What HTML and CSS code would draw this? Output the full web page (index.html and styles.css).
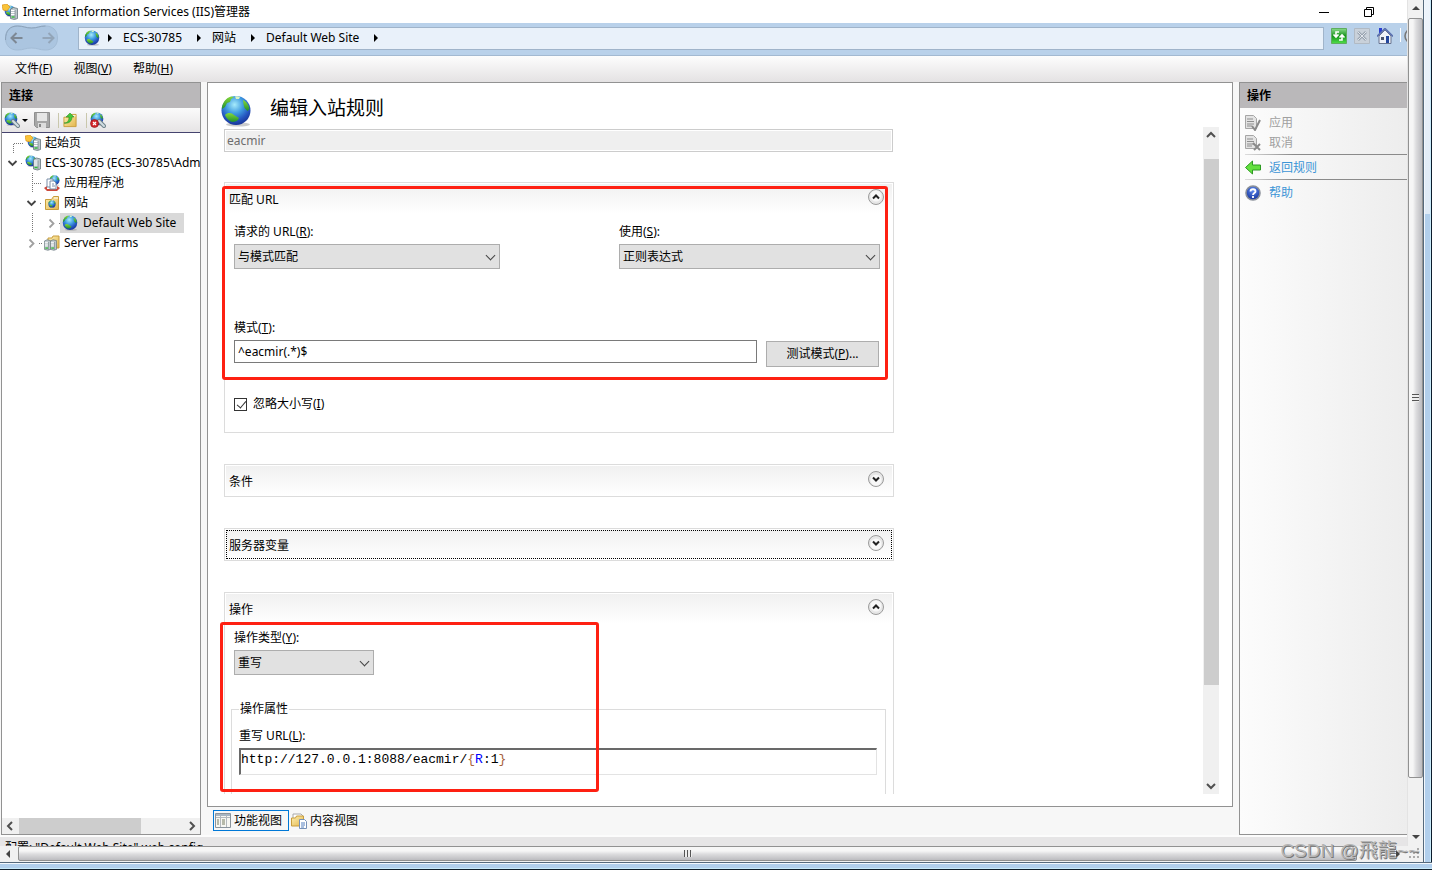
FILE: index.html
```html
<!DOCTYPE html>
<html lang="zh-CN">

<head>
    <meta charset="UTF-8">
    <meta name="viewport" content="width=device-width, initial-scale=1.0">
    <title>Internet Information Services (IIS)管理器</title>
    <link rel="stylesheet" href="styles.css">
</head>

<body>
    <!-- shared icons -->
    <svg class="sprite" aria-hidden="true">
        <defs>
            <radialGradient id="sea" cx="0.45" cy="0.3" r="0.75">
                <stop offset="0" stop-color="#a6ebfb" />
                <stop offset="0.4" stop-color="#3f9be0" />
                <stop offset="0.7" stop-color="#2556c0" />
                <stop offset="1" stop-color="#152c8c" />
            </radialGradient>
            <linearGradient id="land" x1="0" y1="0" x2="0" y2="1">
                <stop offset="0" stop-color="#86d83a" />
                <stop offset="1" stop-color="#1f8f2c" />
            </linearGradient>
            <linearGradient id="paper" x1="0" y1="0" x2="1" y2="1">
                <stop offset="0" stop-color="#fdf0b4" />
                <stop offset="1" stop-color="#e3b64c" />
            </linearGradient>
            <linearGradient id="green" x1="0" y1="0" x2="0" y2="1">
                <stop offset="0" stop-color="#8bdc8b" />
                <stop offset="0.5" stop-color="#16921c" />
                <stop offset="1" stop-color="#4fe04a" />
            </linearGradient>
            <radialGradient id="helpblue" cx="0.5" cy="0.3" r="0.7">
                <stop offset="0" stop-color="#5f8cf0" />
                <stop offset="1" stop-color="#14339c" />
            </radialGradient>
        </defs>
        <symbol id="globe" viewBox="0 0 32 32">
            <ellipse cx="18" cy="29.500" rx="12" ry="2" fill="#999" opacity="0.5" />
            <circle cx="16" cy="15.500" r="14.500" fill="url(#sea)" />
            <path d="M2 12c1-5 4-9 9-10.500l3 0.500-3 2-1 3-3 1-2 4-3 2z" fill="url(#land)" />
            <path d="M15 1.500c1-0.600 4 0 5 0.500l-1 2-3 0z" fill="#d9f3c4" />
            <path d="M23 5c3 1 6 5 6.500 9l-2 2-3-3-1-4z" fill="url(#land)" />
            <path d="M5 20c3-3 7-2 9 0l5 3c-1 3-4 4-7 4-3-1-6-4-7-7z" fill="url(#land)" />
        </symbol>
        <symbol id="tower" viewBox="0 0 8 13">
            <path d="M0.500 2l3-1.500 4 1v10l-3 1-4-1z" fill="#bcc6ca" stroke="#66767c" stroke-width="0.8" />
            <path d="M5 3v9" stroke="#7d8a8f" stroke-width="0.8" />
            <path d="M1 3.500h3.500M1 5.500h3.500M1 7.500h3.500" stroke="#fff" />
            <path d="M1.500 10h3" stroke="#2fbf34" stroke-width="1.4" />
        </symbol>
        <symbol id="server" viewBox="0 0 16 16">
            <use href="#globe" x="0" y="0" width="12" height="12" />
            <use href="#tower" x="8" y="2" width="8" height="14" />
        </symbol>
        <symbol id="start" viewBox="0 0 16 16">
            <use href="#globe" x="2" y="1" width="12" height="12" />
            <path d="M0 1l5-1 3 3-3 4-4-1z" fill="#f9c338" stroke="#d98b10" stroke-width="0.6" />
            <use href="#tower" x="8" y="3" width="8" height="13" />
        </symbol>
        <symbol id="pool" viewBox="0 0 16 16">
            <use href="#globe" x="5" y="0" width="11" height="11" />
            <path d="M0 13l3-2v3h10v-3l3 2-3 3H3z" fill="#cc4a3d" />
            <path d="M3 4h6v8H3z" fill="#fff" stroke="#7b8ea8" />
            <path d="M6 6h4l2 2v6H6z" fill="#fff" stroke="#7b8ea8" />
            <path d="M8 9h2M8 11h3" stroke="#7b8ea8" />
        </symbol>
        <symbol id="folder" viewBox="0 0 16 16">
            <path d="M1.500 4.500h6l2-3h5v13h-13z" fill="url(#paper)" stroke="#c99d3c" />
            <path d="M10 3h4" stroke="#fff" />
        </symbol>
        <symbol id="sites" viewBox="0 0 16 16">
            <use href="#folder" width="16" height="16" />
            <use href="#globe" x="4" y="5" width="8" height="8" />
        </symbol>
        <symbol id="farm" viewBox="0 0 16 16">
            <path d="M4 3h4l1-2h6v12H4z" fill="url(#paper)" stroke="#c99d3c" />
            <use href="#tower" x="0" y="4" width="7" height="12" />
            <use href="#tower" x="6" y="4" width="7" height="12" />
        </symbol>
        <symbol id="connect" viewBox="0 0 16 16">
            <use href="#globe" width="14" height="14" />
            <path d="M9 9l5 5" stroke="#71848c" stroke-width="4" stroke-linecap="round" />
            <path d="M9 9l5 5" stroke="#d3dee3" stroke-width="2" stroke-linecap="round" />
        </symbol>
        <symbol id="disconnect" viewBox="0 0 16 16">
            <use href="#connect" width="16" height="16" />
            <circle cx="4.500" cy="11.500" r="4" fill="#d3262b" stroke="#8f1216" stroke-width="0.6" />
            <path d="M3 10l3 3M6 10l-3 3" stroke="#fff" stroke-width="1.2" />
        </symbol>
        <symbol id="save" viewBox="0 0 16 16">
            <path d="M0.500 0.500h15v15h-13l-2-2z" fill="#a6a6a6" stroke="#8f8f8f" />
            <path d="M3 1h10v8H3z" fill="#e6e6e6" />
            <path d="M4 11h8v5H4z" fill="#ddd" />
            <path d="M5 12h2v3H5z" fill="#888" />
        </symbol>
        <symbol id="up" viewBox="0 0 16 16">
            <use href="#folder" y="1" width="16" height="15" />
            <path d="M2 11c4 0 5-3 5-6H4l4-4 4 4h-2c0 4-3 7-8 6z" fill="#47c738" stroke="#22831c" stroke-width="0.5" />
        </symbol>
        <symbol id="doc" viewBox="0 0 16 16">
            <path d="M0.500 0.500h8l3 3v10h-11z" fill="#e3e3e3" stroke="#a6a6a6" />
            <path d="M2 4h6M2 6.500h7M2 9h7M2 11h5" stroke="#8f8f8f" />
        </symbol>
        <symbol id="chevron-up" viewBox="0 0 16 16">
            <path d="M4 10l4-4 4 4" fill="none" stroke="#505050" stroke-width="2" />
        </symbol>
        <symbol id="chevron-down" viewBox="0 0 16 16">
            <path d="M4 6l4 4 4-4" fill="none" stroke="#505050" stroke-width="2" />
        </symbol>
        <symbol id="chevron-left" viewBox="0 0 16 16">
            <path d="M10 4L6 8l4 4" fill="none" stroke="#505050" stroke-width="2" />
        </symbol>
        <symbol id="chevron-right" viewBox="0 0 16 16">
            <path d="M6 4l4 4-4 4" fill="none" stroke="#505050" stroke-width="2" />
        </symbol>
        <symbol id="expander" viewBox="0 0 16 16">
            <circle cx="8" cy="8" r="7.500" fill="#e6e6e6" stroke="#9b9b9b" />
            <circle cx="8" cy="7" r="5.500" fill="#f8f8f8" />
            <path d="M5 9.500l3-3 3 3" fill="none" stroke="#222" stroke-width="2" />
        </symbol>
        <!-- tree lines -->
        <symbol id="line-first" viewBox="0 0 20 20">
            <path d="M10.500 20V10.500H20" fill="none" stroke="#777" stroke-dasharray="1 1" />
        </symbol>
        <symbol id="line-leaf" viewBox="0 0 20 20">
            <path d="M10.500 0V20M10 10.500H20" fill="none" stroke="#777" stroke-dasharray="1 1" />
        </symbol>
        <symbol id="line-open" viewBox="0 0 20 20">
            <path d="M18 10.500h2" stroke="#777" stroke-dasharray="1 1" />
            <path d="M5.500 8l4 4 4-4" fill="none" stroke="#444" stroke-width="1.8" />
        </symbol>
        <symbol id="line-closed" viewBox="0 0 20 20">
            <path d="M17 10.500h3" stroke="#777" stroke-dasharray="1 1" />
            <path d="M7.500 6.500l4 4-4 4" fill="none" stroke="#a0a0a0" stroke-width="1.8" />
        </symbol>
        <symbol id="line-guide" viewBox="0 0 20 20">
            <path d="M10.500 0V20" stroke="#777" stroke-dasharray="1 1" />
        </symbol>
    </svg>

    <div class="session">
        <div class="app">
            <header class="titlebar">
                <svg class="icon"><use href="#start" /></svg>
                <span class="titlebar-text">Internet Information Services (IIS)管理器</span>
                <button class="win-btn" aria-label="最小化">
                    <svg width="10" height="10"><path d="M0 5.500h10" stroke="#000" /></svg>
                </button>
                <button class="win-btn" aria-label="还原">
                    <svg width="10" height="10"><path d="M0.500 2.500h7v7h-7zM2.500 2V0.500h7v7H8" fill="none" stroke="#000" /></svg>
                </button>
            </header>

            <div class="address">
                <svg class="nav-arrows" viewBox="0 0 54 26">
                    <path d="M1 13C1 5 6 1 13 1c6 0 8 2 14 2s8-2 14-2c7 0 12 4 12 12s-5 12-12 12c-6 0-8-2-14-2s-8 2-14 2C6 25 1 21 1 13z" fill="#abc5e0" stroke="#a3bcd6" />
                    <path d="M1 15C1 5 6 1 13 1c6 0 8 2 14 2s8-2 14-2" fill="none" stroke="#8ba2ba" />
                    <path d="M18 13H7M12 8l-5 5 5 5" fill="none" stroke="#7d8894" stroke-width="2" />
                    <path d="M38 13h11M44 8l5 5-5 5" fill="none" stroke="#93a5b8" stroke-width="2" />
                </svg>
                <nav class="crumbs">
                    <svg class="icon"><use href="#globe" /></svg>
                    <span class="crumb-arrow"></span>
                    <a href="#">ECS-30785</a>
                    <span class="crumb-arrow"></span>
                    <a href="#">网站</a>
                    <span class="crumb-arrow"></span>
                    <a href="#">Default Web Site</a>
                    <span class="crumb-arrow"></span>
                </nav>
                <div class="address-tools">
                    <button aria-label="刷新">
                        <svg class="icon" viewBox="0 0 16 16">
                            <path d="M0.500 0.500h15v15h-15z" fill="url(#green)" stroke="#5fae5f" />
                            <path d="M8 4H5v4M2.500 6.500L5 9l2.500-2.500M8 12h3V8M8.500 9.500L11 7l2.500 2.500" fill="none" stroke="#fff" stroke-width="1.6" />
                        </svg>
                    </button>
                    <button aria-label="停止" disabled>
                        <svg class="icon" viewBox="0 0 16 16">
                            <path d="M0.500 0.500h15v15h-15z" fill="#c9d1da" stroke="#b1bac4" />
                            <path d="M4 4l8 8M12 4l-8 8" stroke="#98a3b0" stroke-width="2.6" />
                            <path d="M4 4l8 8M12 4l-8 8" stroke="#dfe4ea" />
                        </svg>
                    </button>
                    <button aria-label="主页">
                        <svg class="icon" viewBox="0 0 16 16">
                            <path d="M2 0h3v5H2z" fill="#2a3ed0" />
                            <path d="M2 8l6-6 6 6v7.500H2z" fill="#eef1f8" stroke="#6a7590" />
                            <path d="M0 8.500l8-8 8 8" fill="none" stroke="#5a6fae" stroke-width="1.6" />
                            <path d="M4 9h3v3H4z" fill="#48536c" />
                            <path d="M9 8h3v7H9z" fill="#23469c" />
                        </svg>
                    </button>
                    <span class="address-sep"></span>
                    <button aria-label="帮助">
                        <svg class="icon" viewBox="0 0 16 16"><circle cx="8" cy="8" r="7" fill="#c6d6e8" stroke="#777" stroke-width="1.6" /></svg>
                    </button>
                </div>
            </div>

            <nav class="menu">
                <button>文件(<u>F</u>)</button>
                <button>视图(<u>V</u>)</button>
                <button>帮助(<u>H</u>)</button>
            </nav>

            <main class="panes">
                <aside class="pane connections">
                    <h2 class="pane-title">连接</h2>
                    <div class="toolbar">
                        <button aria-label="连接"><svg class="icon"><use href="#connect" /></svg></button>
                        <span class="toolbar-caret"></span>
                        <button aria-label="保存" disabled><svg class="icon"><use href="#save" /></svg></button>
                        <span class="toolbar-sep"></span>
                        <button aria-label="向上"><svg class="icon"><use href="#up" /></svg></button>
                        <span class="toolbar-sep"></span>
                        <button aria-label="断开"><svg class="icon"><use href="#disconnect" /></svg></button>
                    </div>
                    <ul class="tree">
                        <li class="node">
                            <svg class="line"><use href="#line-first" /></svg>
                            <span class="node-label"><svg class="icon"><use href="#start" /></svg>起始页</span>
                        </li>
                        <li class="node">
                            <svg class="line"><use href="#line-open" /></svg>
                            <span class="node-label"><svg class="icon"><use href="#server" /></svg>ECS-30785 (ECS-30785\Administrator)</span>
                        </li>
                        <li class="node node-child">
                            <svg class="line"><use href="#line-leaf" /></svg>
                            <span class="node-label"><svg class="icon"><use href="#pool" /></svg>应用程序池</span>
                        </li>
                        <li class="node node-child">
                            <svg class="line"><use href="#line-open" /></svg>
                            <span class="node-label"><svg class="icon"><use href="#sites" /></svg>网站</span>
                        </li>
                        <li class="node node-child">
                            <svg class="line"><use href="#line-guide" /></svg>
                            <svg class="line"><use href="#line-closed" /></svg>
                            <span class="node-label node-selected"><svg class="icon"><use href="#globe" /></svg>Default Web Site</span>
                        </li>
                        <li class="node node-child">
                            <svg class="line"><use href="#line-closed" /></svg>
                            <span class="node-label"><svg class="icon"><use href="#farm" /></svg>Server Farms</span>
                        </li>
                    </ul>
                    <div class="tree-scroll">
                        <svg class="icon"><use href="#chevron-left" /></svg>
                        <div class="tree-track"><div class="tree-thumb"></div></div>
                        <svg class="icon"><use href="#chevron-right" /></svg>
                    </div>
                </aside>

                <section class="workspace">
                    <div class="pane editor">
                        <div class="editor-head">
                            <svg class="editor-icon"><use href="#globe" /></svg>
                            <h1>编辑入站规则</h1>
                        </div>
                        <div class="editor-body">
                            <form class="rule">
                                <input class="rule-name" type="text" value="eacmir" aria-label="名称" disabled>

                                <div class="card">
                                    <div class="card-head">
                                        <h3>匹配 URL</h3>
                                        <button type="button" class="expander" aria-label="折叠"><svg class="icon"><use href="#expander" /></svg></button>
                                    </div>
                                    <div class="card-body match-body">
                                        <div class="match-row">
                                            <div class="field field-requested">
                                                <label for="requested">请求的 URL(<u>R</u>):</label>
                                                <span class="select"><select id="requested"><option>与模式匹配</option></select></span>
                                            </div>
                                            <div class="field field-using">
                                                <label for="using">使用(<u>S</u>):</label>
                                                <span class="select"><select id="using"><option>正则表达式</option></select></span>
                                            </div>
                                        </div>
                                        <div class="field">
                                            <label for="pattern">模式(<u>T</u>):</label>
                                            <div class="pattern-row">
                                                <input id="pattern" type="text" value="^eacmir(.*)$">
                                                <button type="button" class="test-btn">测试模式(<u>P</u>)...</button>
                                            </div>
                                        </div>
                                        <label class="check"><input type="checkbox" checked><span>忽略大小写(<u>I</u>)</span></label>
                                    </div>
                                    <div class="mark mark-match"></div>
                                </div>

                                <div class="card">
                                    <div class="card-head">
                                        <h3>条件</h3>
                                        <button type="button" class="expander expander-down" aria-label="展开"><svg class="icon"><use href="#expander" /></svg></button>
                                    </div>
                                </div>

                                <div class="card">
                                    <div class="card-head card-focus">
                                        <h3>服务器变量</h3>
                                        <button type="button" class="expander expander-down" aria-label="展开"><svg class="icon"><use href="#expander" /></svg></button>
                                    </div>
                                </div>

                                <div class="card">
                                    <div class="card-head">
                                        <h3>操作</h3>
                                        <button type="button" class="expander" aria-label="折叠"><svg class="icon"><use href="#expander" /></svg></button>
                                    </div>
                                    <div class="card-body">
                                        <div class="field action-type">
                                            <label for="action">操作类型(<u>Y</u>):</label>
                                            <span class="select"><select id="action"><option>重写</option></select></span>
                                        </div>
                                        <fieldset class="action-props">
                                            <legend>操作属性</legend>
                                            <div class="field">
                                                <span id="rewrite-label">重写 URL(<u>L</u>):</span>
                                                <div class="rewrite-url" contenteditable="true" spellcheck="false" role="textbox" aria-labelledby="rewrite-label">http://127.0.0.1:8088/eacmir/<span class="brace">{</span><span class="ref">R</span>:1<span class="brace">}</span></div>
                                            </div>
                                        </fieldset>
                                    </div>
                                    <div class="mark mark-action"></div>
                                </div>
                            </form>
                            <div class="editor-scroll">
                                <svg class="icon"><use href="#chevron-up" /></svg>
                                <div class="editor-track"><div class="editor-thumb"></div></div>
                                <svg class="icon"><use href="#chevron-down" /></svg>
                            </div>
                        </div>
                    </div>
                    <div class="tabs">
                        <button class="tab tab-active">
                            <svg class="icon" viewBox="0 0 16 16">
                                <path d="M0.500 0.500h15v14h-15z" fill="#f7f7f2" stroke="#8a949c" />
                                <path d="M1 1h14v2H1z" fill="#a9b6c2" />
                                <path d="M5.500 3v11M11.500 3v11M1 4.500h14" stroke="#b4b9bd" />
                                <path d="M2 7h2M2 9h2M2 11h2M7 7h3M7 9h3M7 11h3" stroke="#777c60" />
                            </svg>功能视图</button>
                        <button class="tab">
                            <svg class="icon" viewBox="0 0 16 16">
                                <path d="M2 1h8l2 2v9H2z" fill="#fff" stroke="#a8a8a8" />
                                <path d="M0.500 5h4l1-2h7v10h-12z" fill="url(#paper)" stroke="#c99d3c" />
                                <path d="M8.500 6.500h5l2 2v7h-7z" fill="#fff" stroke="#7691b8" />
                                <path d="M10 10h4M10 12h4M10 14h3" stroke="#5480c0" />
                            </svg>内容视图</button>
                    </div>
                </section>

                <aside class="pane actions">
                    <h2 class="pane-title">操作</h2>
                    <div class="action-list">
                        <button class="action" disabled>
                            <svg class="icon" viewBox="0 0 16 16"><use href="#doc" width="16" height="16" /><path d="M7 11l3 4 5-10" fill="none" stroke="#8a8a8a" stroke-width="2" /></svg>应用</button>
                        <button class="action" disabled>
                            <svg class="icon" viewBox="0 0 16 16"><use href="#doc" width="16" height="16" /><path d="M8 8l7 7M15 9l-6 6" stroke="#8a8a8a" stroke-width="2" /></svg>取消</button>
                        <hr>
                        <a class="action" href="#">
                            <svg class="icon" viewBox="0 0 16 16"><path d="M0.500 7.500l7-6.500v4h8v5h-8v4z" fill="#63e03f" stroke="#2d9a22" /></svg>返回规则</a>
                        <hr>
                        <a class="action" href="#">
                            <svg class="icon" viewBox="0 0 16 16">
                                <circle cx="8" cy="8" r="7" fill="url(#helpblue)" stroke="#8a8f99" stroke-width="1.6" />
                                <path d="M5.500 6.500c0-3 5-3 5 0 0 1.600-2.500 1.600-2.500 3.500M8 11v2" fill="none" stroke="#fff" stroke-width="1.8" />
                            </svg>帮助</a>
                    </div>
                </aside>
            </main>

            <footer class="status">配置: "Default Web Site" web.config</footer>
        </div>

        <!-- outer session window -->
        <div class="vscroll">
            <span class="arrow arrow-up"></span>
            <div class="vthumb"><span class="grip"></span></div>
            <span class="arrow arrow-down"></span>
        </div>
        <div class="hscroll">
            <span class="arrow arrow-left"></span>
            <div class="hthumb"><span class="grip grip-h"></span></div>
            <span class="arrow arrow-right"></span>
        </div>
        <svg class="corner" viewBox="0 0 16 16">
            <path d="M10 3h2M6 7h2M10 7h2M2 11h2M6 11h2M10 11h2" stroke="#aaa" stroke-width="2" />
        </svg>
        <div class="edge-right"></div>
        <div class="edge-bottom"></div>
    </div>
    <div class="watermark">CSDN @飛龍~~</div>
</body>

</html>
```
FILE: styles.css
```css
* {
    box-sizing: border-box;
}

body {
    margin: 0;
    font-family: "Noto Sans", "Noto Sans CJK SC", sans-serif;
    font-size: 12px;
    line-height: 16px;
    color: #000;
    background: #fff;
}

button,
input,
select {
    font: inherit;
    color: inherit;
    border-radius: 0;
}

button {
    padding: 0;
    border: 0;
    background: none;
}

a {
    color: inherit;
    text-decoration: none;
}

h1,
h2,
h3 {
    margin: 0;
    font-size: 12px;
    font-weight: normal;
}

u {
    text-underline-offset: 1px;
}

.sprite {
    position: absolute;
    width: 0;
    height: 0;
}

.icon {
    display: block;
    flex: none;
    width: 16px;
    height: 16px;
}

/* outer window */
.session {
    display: grid;
    grid-template-columns: minmax(0, 1fr) 16px 9px;
    grid-template-rows: minmax(0, 1fr) 16px 8px;
    height: 100vh;
    overflow: hidden;
}

.app {
    display: flex;
    flex-direction: column;
    overflow: hidden;
    background: #f7f7f7;
}

/* title bar */
.titlebar {
    display: flex;
    flex: none;
    align-items: center;
    height: 23px;
    padding: 0 16px 0 2px;
    background: #fff;
}

.titlebar-text {
    flex: 1;
    margin-left: 5px;
}

.win-btn {
    display: flex;
    align-items: center;
    justify-content: center;
    width: 45px;
    height: 20px;
}

/* address bar */
.address {
    display: flex;
    flex: none;
    align-items: center;
    height: 33px;
    padding: 0 0 2px 4px;
    border-bottom: 1px solid #a3b9d1;
    background: #b9d1ea;
}

.nav-arrows {
    flex: none;
    width: 55px;
    height: 26px;
    margin-right: 19px;
}

.crumbs {
    display: flex;
    flex: 1;
    align-items: center;
    height: 23px;
    padding-left: 5px;
    border: 1px solid #a0b4ca;
    background: #e9f1fa;
}

.crumb-arrow {
    margin: 0 11px 0 15px;
    border: 4px solid transparent;
    border-left-color: #000;
    border-right: 0;
}

.icon + .crumb-arrow {
    margin-left: 8px;
}

.address-tools {
    display: flex;
    flex: none;
    gap: 7px;
    width: 83px;
    padding: 0 0 4px 7px;
    overflow: hidden;
}

.address-sep {
    flex: none;
    width: 1px;
    height: 14px;
    background: #fff;
}

.address-tools button:last-child {
    margin-left: -4px;
}

/* menu bar */
.menu {
    display: flex;
    flex: none;
    align-items: center;
    gap: 21px;
    height: 26px;
    padding-left: 15px;
    background: linear-gradient(#fdfdfd, #e4e2e3);
}

/* panes */
.panes {
    display: flex;
    flex: 1;
    gap: 6px;
    min-height: 0;
    padding-left: 1px;
}

.pane {
    display: flex;
    flex-direction: column;
    border: 1px solid #929292;
    background: #fff;
}

.pane-title {
    flex: none;
    height: 25px;
    padding-left: 7px;
    font-weight: bold;
    line-height: 25px;
    background: #bab8ba;
}

.connections {
    flex: none;
    width: 200px;
}

.toolbar {
    display: flex;
    flex: none;
    align-items: center;
    height: 25px;
    padding-left: 2px;
    border-bottom: 1px solid #45436e;
    background: linear-gradient(#fbfbfb, #e6e4e5);
}

.toolbar-caret {
    margin: 0 6px 0 2px;
    border: 3px solid transparent;
    border-top-color: #000;
    border-bottom: 0;
}

.toolbar-sep {
    width: 1px;
    height: 15px;
    margin: 0 3px 0 8px;
    background: #c9c7ac;
}

.tree {
    flex: 1;
    min-height: 0;
    margin: 0;
    padding: 0 0 0 1px;
    overflow: hidden;
    list-style: none;
}

.node {
    display: flex;
    height: 20px;
}

.node-child {
    padding-left: 19px;
}

.line {
    flex: none;
    width: 20px;
    height: 20px;
}

.node-label {
    display: flex;
    align-items: center;
    gap: 4px;
    padding: 0 4px 0 2px;
    white-space: nowrap;
}

.node-selected {
    gap: 5px;
    margin-left: -2px;
    padding-right: 8px;
    background: #d9d9d9;
}

.tree-scroll {
    display: flex;
    flex: none;
    background: #f0f0f0;
}

.tree-track {
    flex: 1;
    padding-left: 1px;
}

.tree-thumb {
    width: 74%;
    height: 16px;
    background: #cdcdcd;
}

/* editor */
.workspace {
    display: flex;
    flex: 1;
    flex-direction: column;
    min-width: 0;
}

.editor {
    flex: 1;
    min-height: 0;
}

.editor-head {
    display: flex;
    flex: none;
    gap: 18px;
    height: 44px;
    padding: 12px 0 0 12px;
}

.editor-head h1 {
    font-size: 19px;
    line-height: 26px;
}

.editor-icon {
    width: 32px;
    height: 32px;
}

.editor-body {
    display: flex;
    flex: 1;
    justify-content: space-between;
    min-height: 0;
    margin-bottom: 12px;
    padding-right: 13px;
    overflow: hidden;
}

.rule {
    width: 686px;
    padding: 2px 0 0 16px;
}

.rule-name {
    display: block;
    width: 669px;
    height: 23px;
    margin-bottom: 30px;
    padding: 0 2px;
    border: 1px solid #ccc;
    outline: 1px solid #fff;
    outline-offset: -2px;
    color: #6d6d6d;
    background: #efefef;
}

.card {
    position: relative;
    margin-bottom: 31px;
    padding: 1px;
    border: 1px solid #dcdcdc;
}

.card-head {
    display: flex;
    align-items: center;
    justify-content: space-between;
    height: 29px;
    padding: 0 8px 0 3px;
    background: linear-gradient(#f0f0f0, #fff);
}

.card-head h3 {
    padding-top: 3px;
}

.card-focus {
    outline: 1px dotted #000;
    outline-offset: -1px;
}

.expander {
    margin-bottom: 3px;
}

.expander-down {
    transform: rotate(180deg);
}

.card-body {
    padding: 7px 6px 0 5px;
}

.match-body {
    padding: 11px 12px 19px 8px;
}

.field {
    display: flex;
    flex-direction: column;
    gap: 4px;
}

.match-row {
    display: flex;
    justify-content: space-between;
    margin-bottom: 51px;
}

.field-requested {
    width: 266px;
}

.field-using {
    width: 261px;
}

.select {
    position: relative;
    display: block;
}

.select select {
    display: block;
    width: 100%;
    height: 25px;
    padding: 0 3px;
    border: 1px solid #adadad;
    background: #e1e1e1;
    appearance: none;
}

.select::after {
    content: "";
    position: absolute;
    top: 8px;
    right: 6px;
    width: 6px;
    height: 6px;
    border: solid #444;
    border-width: 0 1px 1px 0;
    transform: rotate(45deg);
}

.pattern-row {
    display: flex;
    gap: 9px;
    padding-right: 1px;
}

.pattern-row input {
    flex: 1;
    height: 23px;
    padding: 0 3px;
    border: 1px solid #7a7a7a;
}

.test-btn {
    width: 113px;
    height: 26px;
    margin-top: 1px;
    border: 1px solid #adadad;
    background: #e1e1e1;
}

.check {
    display: flex;
    align-items: center;
    gap: 6px;
    margin-top: 29px;
}

.check input {
    position: relative;
    width: 13px;
    height: 13px;
    margin: 0;
    border: 1px solid #333;
    background: #fff;
    appearance: none;
}

.check input:checked::after {
    content: "";
    position: absolute;
    top: 0;
    left: 4px;
    width: 4px;
    height: 8px;
    border: solid #333;
    border-width: 0 1px 1px 0;
    transform: rotate(40deg);
}

.action-type {
    width: 140px;
    margin: 0 0 26px 3px;
}

.action-props {
    min-width: 0;
    height: 140px;
    margin: 0;
    padding: 11px 8px 0 7px;
    border: 1px solid #dcdcdc;
}

.action-props legend {
    padding: 0 1px;
}

.rewrite-url {
    height: 27px;
    border: 1px solid #e3e3e3;
    border-top: 2px solid #696969;
    border-left: 2px solid #696969;
    font-family: "Liberation Mono", monospace;
    font-size: 13px;
    line-height: 20px;
    white-space: nowrap;
}

.brace {
    color: #a8623c;
}

.ref {
    color: #00f;
}

/* red highlight frames */
.mark {
    position: absolute;
    border: 3px solid #fe2012;
    border-radius: 3px;
    pointer-events: none;
}

.mark-match {
    top: 3px;
    right: 5px;
    bottom: 52px;
    left: -3px;
}

.mark-action {
    top: 29px;
    left: -5px;
    width: 379px;
    height: 170px;
}

.editor-scroll {
    display: flex;
    flex-direction: column;
    background: #f0f0f0;
}

.editor-track {
    flex: 1;
    padding: 16px 0 0 1px;
}

.editor-thumb {
    width: 15px;
    height: 85%;
    background: #cdcdcd;
}

.tabs {
    display: flex;
    flex: none;
    height: 28px;
    padding: 3px 0 4px 6px;
}

.tab {
    display: flex;
    align-items: center;
    gap: 3px;
    padding: 0 6px 0 1px;
    border: 1px solid transparent;
}

.tab-active {
    border-color: #0078d7;
}

/* actions */
.actions {
    flex: none;
    width: 168px;
    border-right: 0;
    background: linear-gradient(90deg, #fcfcfc, #ededed);
}

.action-list {
    padding: 4px 0 0 5px;
}

.action-list hr {
    height: 1px;
    margin: 2px 0;
    border: 0;
    background: linear-gradient(90deg, #ddd, #8a8a8a 30%);
}

.action {
    display: flex;
    align-items: center;
    gap: 8px;
    height: 20px;
    padding-top: 2px;
    color: #3c95d6;
}

.action:disabled {
    color: #a0a0a0;
}

.status {
    flex: none;
    height: 11px;
    padding: 3px 0 0 5px;
    border-top: 2px solid #fcfcfc;
    overflow: hidden;
    background: #e6e5e6;
}

/* session scrollbars and frame */
.vscroll {
    display: flex;
    flex-direction: column;
    align-items: center;
    padding: 6px 0 7px;
    border-left: 1px solid #e3e3e3;
    background: #f1f1f1;
}

.vthumb {
    display: flex;
    flex: 1;
    align-items: center;
    justify-content: center;
    width: 15px;
    margin: 8px 0 57px;
    border: 1px solid #919191;
    border-radius: 2px;
    background: linear-gradient(90deg, #f6f6f6 30%, #dcdcde 55%, #bcbcc0);
}

.arrow {
    border: 4px solid transparent;
}

.arrow-up {
    border-top: 0;
    border-bottom-color: #444;
}

.arrow-down {
    border-bottom: 0;
    border-top-color: #444;
}

.arrow-left {
    border-left: 0;
    border-right-color: #444;
}

.arrow-right {
    border-right: 0;
    border-left-color: #444;
}

.grip {
    width: 7px;
    height: 8px;
    background: repeating-linear-gradient(#555 0 1px, #eee 1px 3px);
}

.grip-h {
    width: 8px;
    height: 7px;
    background: repeating-linear-gradient(90deg, #555 0 1px, #eee 1px 3px);
}

.hscroll {
    display: flex;
    grid-row: 2;
    grid-column: 1;
    align-items: flex-start;
    padding: 0 7px 0 6px;
    background: #f1f1f1;
}

.hscroll .arrow {
    margin-top: 4px;
}

.hthumb {
    display: flex;
    flex: 1;
    align-items: center;
    justify-content: center;
    height: 15px;
    margin: 0 39px 0 8px;
    border: 1px solid #919191;
    border-radius: 2px;
    background: linear-gradient(#f6f6f6 30%, #dcdcde 55%, #bcbcc0);
}

.corner {
    width: 16px;
    height: 16px;
    background: #f1f1f1;
}

.edge-right {
    grid-row: 1 / 4;
    grid-column: 3;
    border: solid #56697c;
    border-width: 0 1px;
    border-right-color: #0b1b2b;
    background: linear-gradient(#eef4fb 0, #dfeaf6 214px, #b2cfec 214px);
    box-shadow: inset 1px 0 #f3f8fd, inset -1px 0 #c8eafa;
}

.edge-bottom {
    grid-row: 3;
    grid-column: 1 / 4;
    border: solid #56697c;
    border-width: 1px 0;
    border-bottom-color: #14202c;
    background: #b2cfec;
    box-shadow: inset 0 1px #f3f8fd, inset 0 -1px #c8eafa;
}

.watermark {
    position: absolute;
    right: 13px;
    bottom: 6px;
    font-family: "Liberation Sans", "Noto Sans CJK SC", sans-serif;
    font-size: 19px;
    line-height: 26px;
    color: #b5b5b5;
    text-shadow: 1px 1px #777;
    pointer-events: none;
}
```
